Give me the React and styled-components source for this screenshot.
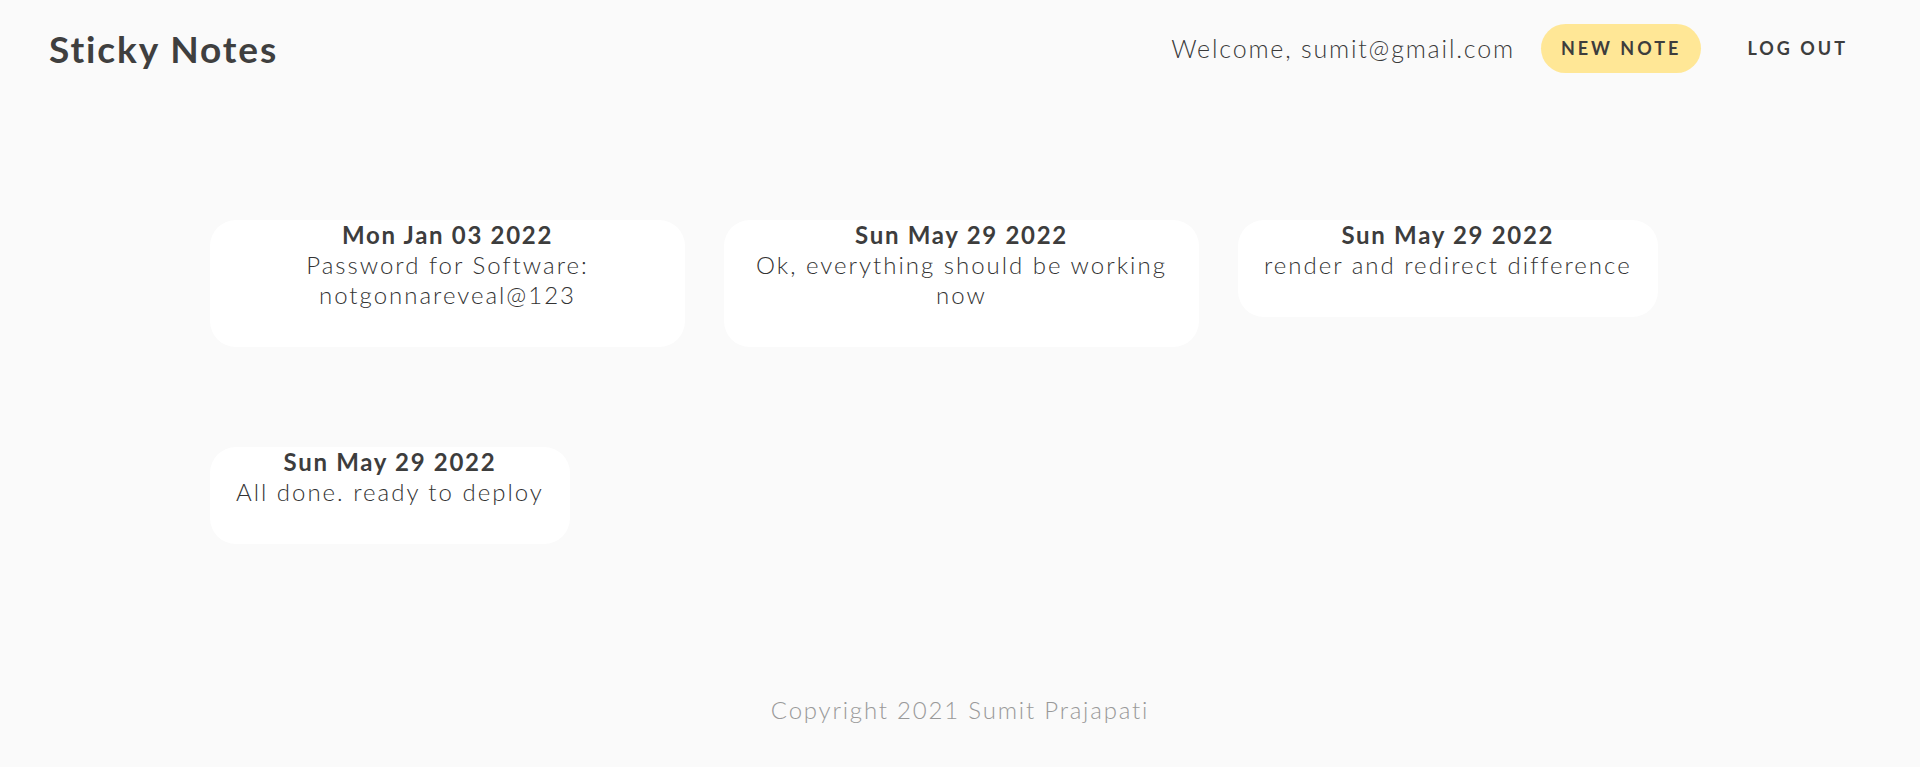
import React from 'react';
import styled, { createGlobalStyle } from 'styled-components';

const GlobalStyle = createGlobalStyle`
  body {
    margin: 0;
    background: #fafafa;
    font-family: "Lato", "Open Sans", sans-serif;
    color: #3d3d3d;
  }
`;

const Page = styled.div`
  min-height: 100vh;
  display: flex;
  flex-direction: column;
`;

const Header = styled.header`
  height: 96px;
  display: flex;
  align-items: center;
  justify-content: space-between;
  padding: 0 52px 0 49px;
`;

const Title = styled.h1`
  margin: 0;
  font-size: 37px;
  font-weight: 700;
  letter-spacing: 1.9px;
  color: #3f3f3f;
`;

const Nav = styled.div`
  display: flex;
  align-items: center;
  gap: 26px;
`;

const Welcome = styled.span`
  font-size: 25px;
  font-weight: 300;
  letter-spacing: 1.8px;
  color: #3a3a3a;
`;

const NavButton = styled.button`
  height: 49px;
  padding: 0 20px;
  border: none;
  border-radius: 25px;
  background: ${(props) => (props.$primary ? '#ffe796' : 'transparent')};
  font-family: inherit;
  font-size: 18px;
  font-weight: 700;
  letter-spacing: 3px;
  color: #3d3d3d;
  cursor: pointer;
`;

const Notes = styled.main`
  flex: 1;
  display: flex;
  flex-wrap: wrap;
  align-content: flex-start;
  align-items: flex-start;
  column-gap: 39px;
  row-gap: 100px;
  padding: 124px 210px 0;
`;

const Note = styled.div`
  box-sizing: border-box;
  max-width: 475px;
  padding: 0 26px 37px;
  background: #fff;
  border-radius: 26px;
  text-align: center;
  font-size: 24px;
  line-height: 30px;
`;

const NoteDate = styled.div`
  font-weight: 700;
  letter-spacing: 1.7px;
  color: #3d3d3d;
`;

const NoteText = styled.div`
  font-weight: 300;
  letter-spacing: 2px;
  color: #333;
`;

const Footer = styled.footer`
  padding-bottom: 42px;
  text-align: center;
  font-size: 24px;
  line-height: 30px;
  font-weight: 300;
  letter-spacing: 1.8px;
  color: #999;
`;

const notes = [
  { date: 'Mon Jan 03 2022', text: 'Password for Software: notgonnareveal@123' },
  { date: 'Sun May 29 2022', text: 'Ok, everything should be working now' },
  { date: 'Sun May 29 2022', text: 'render and redirect difference' },
  { date: 'Sun May 29 2022', text: 'All done. ready to deploy' },
];

const App = () => {
  return (
    <Page>
      <GlobalStyle />
      <Header>
        <Title>Sticky Notes</Title>
        <Nav>
          <Welcome>Welcome, sumit@gmail.com</Welcome>
          <NavButton $primary>NEW NOTE</NavButton>
          <NavButton>LOG OUT</NavButton>
        </Nav>
      </Header>

      <Notes>
        {notes.map((note, index) => (
          <Note key={index}>
            <NoteDate>{note.date}</NoteDate>
            <NoteText>{note.text}</NoteText>
          </Note>
        ))}
      </Notes>

      <Footer>Copyright 2021 Sumit Prajapati</Footer>
    </Page>
  );
};

export default App;
